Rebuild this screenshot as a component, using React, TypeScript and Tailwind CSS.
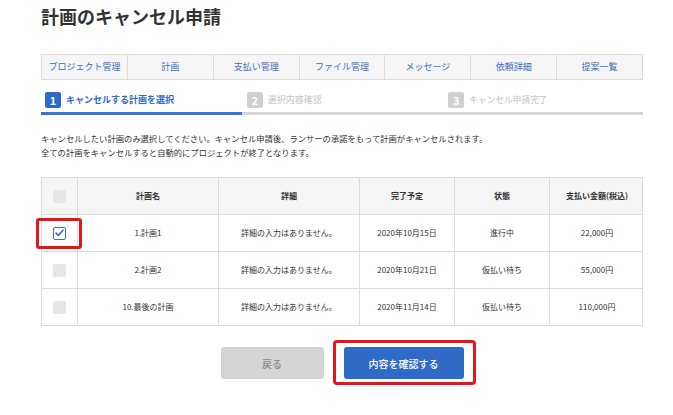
import React from "react";

const tabs = ["プロジェクト管理", "計画", "支払い管理", "ファイル管理", "メッセージ", "依頼詳細", "提案一覧"];

const rows = [
  { name: "1.計画1", date: "2020年10月15日", status: "進行中", amount: "22,000円", checked: true },
  { name: "2.計画2", date: "2020年10月21日", status: "仮払い待ち", amount: "55,000円", checked: false },
  { name: "10.最後の計画", date: "2020年11月14日", status: "仮払い待ち", amount: "110,000円", checked: false },
];

const cols = "grid grid-cols-[35px_141px_141px_95px_95px_95px]";

export default function App() {
  return (
    <div className="w-[673px] h-[415px] bg-white overflow-hidden text-[#333]" style={{ fontFamily: '"Noto Sans CJK JP", "Noto Sans", sans-serif' }}>
      <div className="ml-[41px] w-[602px]">
        <h1 className="pt-[4px] text-[18px] leading-[24px] font-bold text-[#333]">計画のキャンセル申請</h1>

        <div className="mt-[26px] flex border border-[#dcdcdc] bg-[#f5f5f5] h-[26px]">
          {tabs.map((t, i) => (
            <div key={t} className={`flex-1 flex items-center justify-center text-[9px] text-[#3b6fc4] ${i > 0 ? "border-l border-[#dcdcdc]" : ""}`}>
              {t}
            </div>
          ))}
        </div>

        <div className="mt-[12px] grid grid-cols-3">
          <div className="flex items-center h-[16px] pl-[4px] gap-[5px]">
            <span className="w-[16px] h-[16px] rounded-[2px] bg-[#2f6bc6] text-white text-[11px] font-bold flex items-center justify-center">1</span>
            <span className="text-[9px] font-bold text-[#2f6bc6]">キャンセルする計画を選択</span>
          </div>
          <div className="flex items-center h-[16px] pl-[5px] gap-[5px]">
            <span className="w-[16px] h-[16px] rounded-[2px] bg-[#d0d0d0] text-white text-[11px] font-bold flex items-center justify-center">2</span>
            <span className="text-[9px] text-[#c4c4c4]">選択内容確認</span>
          </div>
          <div className="flex items-center h-[16px] pl-[6px] gap-[5px]">
            <span className="w-[16px] h-[16px] rounded-[2px] bg-[#d0d0d0] text-white text-[11px] font-bold flex items-center justify-center">3</span>
            <span className="text-[8.7px] text-[#c4c4c4]">キャンセル申請完了</span>
          </div>
        </div>
        <div className="mt-[4px] flex h-[3px] bg-[#d6d6d6]">
          <div className="w-1/3 bg-[#3a74d0]" />
        </div>

        <div className="mt-[16px] text-[8.3px] leading-[14px] text-[#333]">
          <p>キャンセルしたい計画のみ選択してください。キャンセル申請後、ランサーの承諾をもって計画がキャンセルされます。</p>
          <p>全ての計画をキャンセルすると自動的にプロジェクトが終了となります。</p>
        </div>

        <div className="mt-[18px] border border-[#dcdcdc] text-[8px]">
          <div className={`${cols} h-[36px] bg-[#f5f5f5] font-bold`}>
            <div className="flex items-center justify-center">
              <span className="w-[13px] h-[13px] rounded-[2px] bg-[#e6e6e6]" />
            </div>
            {["計画名", "詳細", "完了予定", "状態", "支払い金額(税込)"].map((h) => (
              <div key={h} className="flex items-center justify-center border-l border-[#dcdcdc]">{h}</div>
            ))}
          </div>
          {rows.map((r) => (
            <div key={r.name} className={`${cols} h-[37px] border-t border-[#dcdcdc]`}>
              <div className="relative flex items-center justify-center">
                {r.checked ? (
                  <>
                    <span className="w-[13px] h-[13px] rounded-[2px] border border-[#3a74d0] bg-white flex items-center justify-center">
                      <svg width="9" height="8" viewBox="0 0 9 8">
                        <path d="M1 4.2 L3.4 6.4 L8 1.3" fill="none" stroke="#2f6bc6" strokeWidth="1.6" strokeLinecap="round" strokeLinejoin="round" />
                      </svg>
                    </span>
                    <div className="absolute left-[-6px] top-[3px] w-[46px] h-[31px] border-[3px] border-[#e8141c] rounded-[3px]" />
                  </>
                ) : (
                  <span className="w-[13px] h-[13px] rounded-[2px] bg-[#e6e6e6]" />
                )}
              </div>
              <div className="flex items-center justify-center border-l border-[#dcdcdc]">{r.name}</div>
              <div className="flex items-center justify-center border-l border-[#dcdcdc]">詳細の入力はありません。</div>
              <div className="flex items-center justify-center border-l border-[#dcdcdc]">{r.date}</div>
              <div className="flex items-center justify-center border-l border-[#dcdcdc]">{r.status}</div>
              <div className="flex items-center justify-center border-l border-[#dcdcdc]">{r.amount}</div>
            </div>
          ))}
        </div>

        <div className="mt-[21px] flex justify-center gap-[20px]">
          <button className="w-[103px] h-[32px] rounded-[3px] bg-[#d4d4d4] text-[#8a8a8a] text-[10px] font-medium">戻る</button>
          <div className="relative">
            <button className="w-[120px] h-[32px] rounded-[3px] bg-[#2f6bc6] text-white text-[10px] font-medium">内容を確認する</button>
            <div className="absolute left-[-11px] right-[-12px] top-[-7px] bottom-[-6px] border-[3px] border-[#e8141c] rounded-[4px]" />
          </div>
        </div>
      </div>
    </div>
  );
}
